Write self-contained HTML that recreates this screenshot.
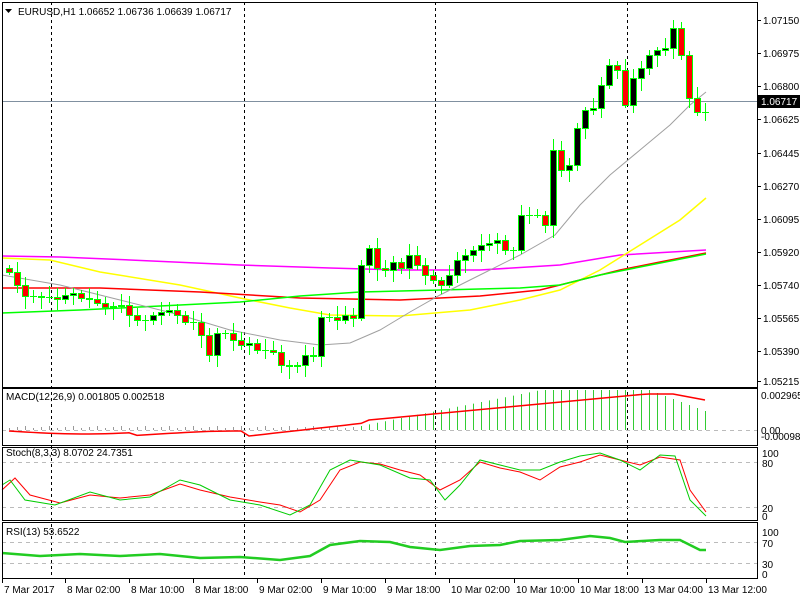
<!DOCTYPE html>
<html><head><meta charset="utf-8"><style>
body{margin:0;background:#fff;width:800px;height:600px;overflow:hidden}
svg{display:block;font-family:"Liberation Sans",sans-serif;font-size:10px}
</style></head><body>
<svg id="s" width="800" height="600" xmlns="http://www.w3.org/2000/svg">
<rect width="800" height="600" fill="#fff"/>
</svg>
<script>
var s=document.getElementById('s'),h='';
function L(x1,y1,x2,y2,c,w,d){h+='<line x1="'+x1+'" y1="'+y1+'" x2="'+x2+'" y2="'+y2+'" stroke="'+c+'" stroke-width="'+(w||1)+'"'+(d?' stroke-dasharray="'+d+'"':'')+'/>';}
function P(pts,c,w){h+='<polyline fill="none" stroke="'+c+'" stroke-width="'+(w||1)+'" points="'+pts.map(function(p){return p.join(',')}).join(' ')+'"/>';}
function T(x,y,t,a){h+='<text x="'+x+'" y="'+y+'" fill="#000"'+(a?' text-anchor="'+a+'"':'')+'>'+t+'</text>';}
var panels=[[2,387],[388,445],[447,520],[522,578]];
[51,244,435,627].forEach(function(x){L(x+.5,2,x+.5,578,'#000',1,'3,3');});
[[430,'#bbb'],[462,'#bbb'],[507,'#bbb'],[542,'#bbb'],[563,'#bbb']].forEach(function(a){L(2,a[0]+.5,757,a[0]+.5,a[1],1,'4,4');});
P([[2,256],[60,257],[130,260],[240,265],[330,268],[400,270],[480,270],[560,265],[620,255],[706,250]],'#f0f',1.5);
P([[2,258],[50,260],[100,272],[180,285],[240,298],[290,308],[330,315],[400,316],[470,310],[520,300],[560,290],[600,270],[640,245],[680,220],[706,198]],'#ff0',1.5);
P([[2,288],[100,288],[200,292],[300,298],[400,300],[480,296],[540,290],[580,280],[620,270],[660,262],[706,253]],'#f00',1.5);
P([[2,313],[80,310],[160,306],[240,302],[300,296],[360,292],[440,290],[520,288],[560,285],[600,275],[640,267],[706,254]],'#0f0',1.5);
P([[2,275],[60,285],[120,300],[180,315],[230,330],[280,340],[320,345],[350,343],[380,330],[410,312],[440,295],[480,275],[520,255],[555,235],[580,205],[610,175],[640,150],[670,125],[690,105],[706,92]],'#a0a0a0',1);
L(2,101.5,757,101.5,'#8090a0',1);
var c=[272,285,296,296,297,297,299,295,293,298,299,303,307,306,305,315,320,320,315,312,310,315,322,322,335,355,333,333,340,345,343,350,350,352,365,366,365,355,356,317,317,320,315,318,265,248,268,270,262,268,255,265,275,280,285,275,260,255,250,245,243,240,250,250,215,215,215,225,150,170,165,128,110,108,85,65,70,105,78,68,55,50,48,28,55,98,112,112];
var prev=268;
c.forEach(function(cl,i){
 var x=9+8*i,o=prev;prev=cl;
 var t=Math.min(o,cl),b=Math.max(o,cl);
 var hi=t-3-((i*7)%9),lo=b+3+((i*5)%11);
 L(x+.5,hi,x+.5,lo,'#0f0',1);
 if(b-t<1){L(x-3,t+.5,x+4,t+.5,'#0f0',1);}
 else h+='<rect x="'+(x-3)+'.5" y="'+(t+.5)+'" width="6" height="'+(b-t)+'" fill="'+(cl<o?'#000':'#f00')+'" stroke="#0f0" stroke-width="1"/>';
});
for(var i=0;i<88;i++){
 var x=9+8*i,v;
 if(i<44)v=2+(i%3); else v=Math.min(40,(i-44)*1.6+4);
 if(i>80)v=40-(i-80)*3;
 L(x+.5,430,x+.5,430-v,i<44?'#999':'#3c3',1);
}
var ms=[];for(var i=0;i<88;i++){var x=9+8*i,y;if(i<30)y=431+Math.sin(i/6)*3+(i>15?3:0);else if(i<45)y=436-(i-30)*0.9;else y=Math.max(394,420-(i-45)*0.75);if(i>83)y=394+(i-83)*1.5;ms.push([x,y]);}
P(ms,'#f00',1.5);
P([[2,490],[15,478],[30,495],[60,503],[90,495],[120,498],[150,495],[180,484],[200,490],[230,497],[260,502],[280,505],[300,512],[320,500],[340,470],[360,462],[380,464],[400,470],[420,475],[440,490],[460,480],[480,462],[500,468],[520,472],[540,480],[560,467],[580,462],[600,455],[620,460],[640,465],[660,457],[680,460],[690,490],[706,512]],'#f00',1);
P([[2,485],[10,480],[25,500],[55,505],[90,492],[120,500],[150,497],[180,480],[200,485],[230,500],[260,505],[290,515],[310,505],[330,470],[350,460],[380,465],[410,478],[430,480],[445,500],[460,485],[480,460],[500,465],[520,470],[540,470],[560,462],[580,456],[600,453],[620,460],[640,470],[660,455],[675,456],[690,500],[706,516]],'#0c0',1);
P([[2,553],[40,556],[80,554],[120,556],[160,554],[200,558],[240,557],[280,560],[310,556],[330,545],[360,541],[390,542],[410,547],[440,550],[470,546],[500,545],[520,541],[560,540],[590,536],[610,538],[625,542],[660,540],[680,540],[700,550],[706,550]],'#2c2',2.5);
panels.forEach(function(p){h+='<rect x="2.5" y="'+(p[0]+.5)+'" width="755" height="'+(p[1]-p[0])+'" fill="none" stroke="#000"/>';});
[[20,'1.07150'],[53,'1.06975'],[86,'1.06800'],[119,'1.06625'],[153,'1.06445'],[186,'1.06270'],[219,'1.06095'],[252,'1.05920'],[285,'1.05740'],[318,'1.05565'],[351,'1.05390'],[381,'1.05215']].forEach(function(a){L(757,a[0]+.5,761,a[0]+.5,'#000');T(763,a[0]+4,a[1]);});
h+='<rect x="758" y="95" width="42" height="13" fill="#000"/><text x="761" y="105" fill="#fff">1.06717</text>';
T(761,399,'0.002965');T(761,434,'0.00');T(761,440,'-0.000985');
[[453,'100'],[463,'80'],[508,'20'],[516,'0'],[532,'100'],[543,'70'],[564,'30'],[574,'0']].forEach(function(a){T(762,a[0]+4,a[1]);});
T(6,456,'Stoch(8,3,3) 8.0702 24.7351');T(6,400,'MACD(12,26,9) 0.001805 0.002518');T(6,535,'RSI(13) 53.6522');
h+='<path d="M5 9 L12 9 L8.5 13 Z" fill="#000"/>';T(18,15,'EURUSD,H1  1.06652 1.06736 1.06639 1.06717');
[[2,'7 Mar 2017'],[65,'8 Mar 02:00'],[129,'8 Mar 10:00'],[193,'8 Mar 18:00'],[257,'9 Mar 02:00'],[321,'9 Mar 10:00'],[385,'9 Mar 18:00'],[449,'10 Mar 02:00'],[514,'10 Mar 10:00'],[578,'10 Mar 18:00'],[642,'13 Mar 04:00'],[706,'13 Mar 12:00']].forEach(function(a){L(a[0]+.5,579,a[0]+.5,583,'#000');T(a[0]+2,593,a[1]);});
s.innerHTML+=h;
</script>
</body></html>
